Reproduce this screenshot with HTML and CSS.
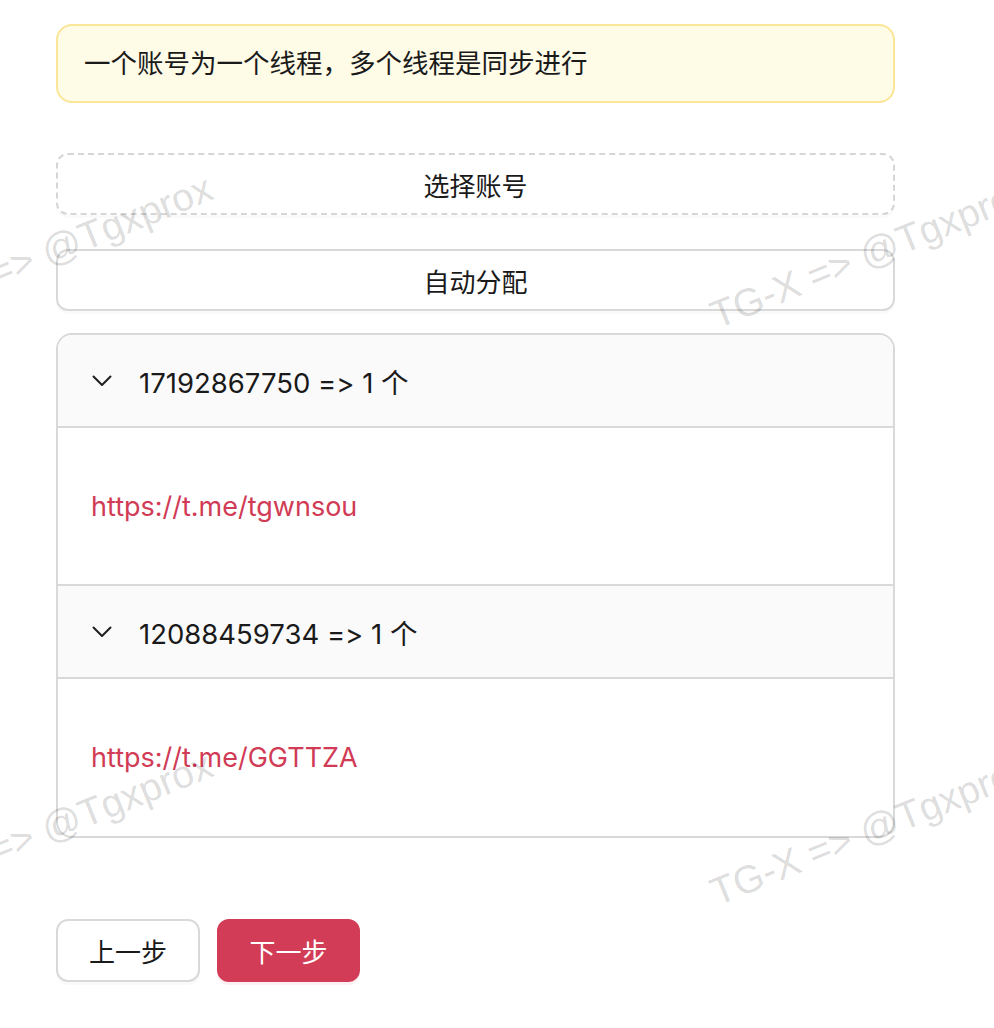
FILE: index.html
```html
<!DOCTYPE html>
<html lang="zh-CN">
<head>
<meta charset="utf-8">
<title>分配</title>
<link rel="stylesheet" href="styles.css">
</head>
<body>
<div class="page">
  <div class="alert">一个账号为一个线程，多个线程是同步进行</div>
  <button class="btn btn-block btn-dashed first">选择账号</button>
  <button class="btn btn-block second">自动分配</button>
  <div class="collapse">
    <div class="item">
      <div class="header">
        <svg class="chev" width="20" height="12" viewBox="0 0 20 12"><path d="M1.5 1.5 L10 10 L18.5 1.5" fill="none" stroke="#1f1f1f" stroke-width="2" stroke-linecap="round" stroke-linejoin="round"/></svg>
        <span class="title">17192867750 =&gt; 1 个</span>
      </div>
      <div class="content"><span class="link">https://t.me/tgwnsou</span></div>
    </div>
    <div class="item">
      <div class="header">
        <svg class="chev" width="20" height="12" viewBox="0 0 20 12"><path d="M1.5 1.5 L10 10 L18.5 1.5" fill="none" stroke="#1f1f1f" stroke-width="2" stroke-linecap="round" stroke-linejoin="round"/></svg>
        <span class="title">12088459734 =&gt; 1 个</span>
      </div>
      <div class="content"><span class="link">https://t.me/GGTTZA</span></div>
    </div>
  </div>
  <div class="actions">
    <button class="btn btn-step">上一步</button>
    <button class="btn btn-step btn-primary">下一步</button>
  </div>
</div>
<div class="watermark">
  <span class="wm wm-a">TG-X =&gt; @Tgxprox</span>
  <span class="wm wm-b">TG-X =&gt; @Tgxprox</span>
  <span class="wm wm-c">TG-X =&gt; @Tgxprox</span>
  <span class="wm wm-d">TG-X =&gt; @Tgxprox</span>
</div>
</body>
</html>
```
FILE: styles.css
```css
html, body {
  margin: 0;
  padding: 0;
  background: #ffffff;
}
body {
  font-family: Inter, "Noto Sans CJK SC", sans-serif;
  font-feature-settings: "calt" 0, "liga" 0;
  font-variant-ligatures: none;
  color: #1a1a1a;
  font-size: 26.5px;
  position: relative;
  min-height: 1028px;
  overflow: hidden;
}
.page {
  width: 839px;
  padding: 24px 0 0 56px;
  display: flex;
  flex-direction: column;
}
.alert {
  box-sizing: border-box;
  height: 79px;
  border: 2px solid #fbe596;
  background: #fefbe7;
  border-radius: 16px;
  padding: 0 26px;
  display: flex;
  align-items: center;
  line-height: 1.5;
}
.btn {
  font-family: Inter, "Noto Sans CJK SC", sans-serif;
  font-size: 26px;
  color: #1a1a1a;
  background: #ffffff;
  border: 2px solid #d9d9d9;
  border-radius: 12px;
  box-sizing: border-box;
  box-shadow: 0 3px 0 rgba(0, 0, 0, 0.02);
  padding: 0;
  display: flex;
  align-items: center;
  justify-content: center;
  cursor: pointer;
}
.btn-block {
  width: 100%;
  height: 62px;
}
.btn-dashed {
  border-style: dashed;
  border-color: #d6d6d6;
}
.first { margin-top: 50px; }
.second { margin-top: 34px; }
.collapse {
  margin-top: 22px;
  border: 2px solid #d9d9d9;
  border-radius: 16px;
  overflow: hidden;
  display: flex;
  flex-direction: column;
}
.header {
  box-sizing: border-box;
  height: 93px;
  background: #fafafa;
  border-bottom: 2px solid #d9d9d9;
  display: flex;
  align-items: center;
  padding-left: 34px;
}
.title {
  font-size: 27.5px;
}
.chev {
  width: 20px;
  height: 12px;
  margin-right: 27px;
  flex: none;
}
.content {
  box-sizing: border-box;
  height: 158px;
  display: flex;
  align-items: center;
  padding-left: 33px;
  border-bottom: 2px solid #d9d9d9;
}
.item:last-child .content {
  border-bottom: none;
  height: 157px;
}
.link {
  color: #d13b55;
  font-size: 27px;
}
.actions {
  margin-top: 81px;
  display: flex;
  gap: 17px;
}
.btn-step {
  width: 144px;
  height: 63px;
}
.btn-primary {
  width: 143px;
  background: #d23c56;
  border-color: #d23c56;
  color: #ffffff;
  box-shadow: 0 3px 0 rgba(210, 60, 86, 0.08);
}
.watermark {
  position: absolute;
  left: 0;
  top: 0;
  width: 994px;
  height: 1028px;
  pointer-events: none;
  overflow: hidden;
}
.wm {
  position: absolute;
  font-family: "Liberation Sans", Arial, sans-serif;
  font-size: 39px;
  line-height: 39px;
  height: 39px;
  white-space: nowrap;
  color: rgba(0, 0, 0, 0.15);
  transform-origin: 0 35px;
  transform: rotate(-22deg);
}
.wm-a { left: -100px; top: 293px; }
.wm-b { left: 718px; top: 296px; }
.wm-c { left: -100px; top: 870px; }
.wm-d { left: 718px; top: 873px; }
```
